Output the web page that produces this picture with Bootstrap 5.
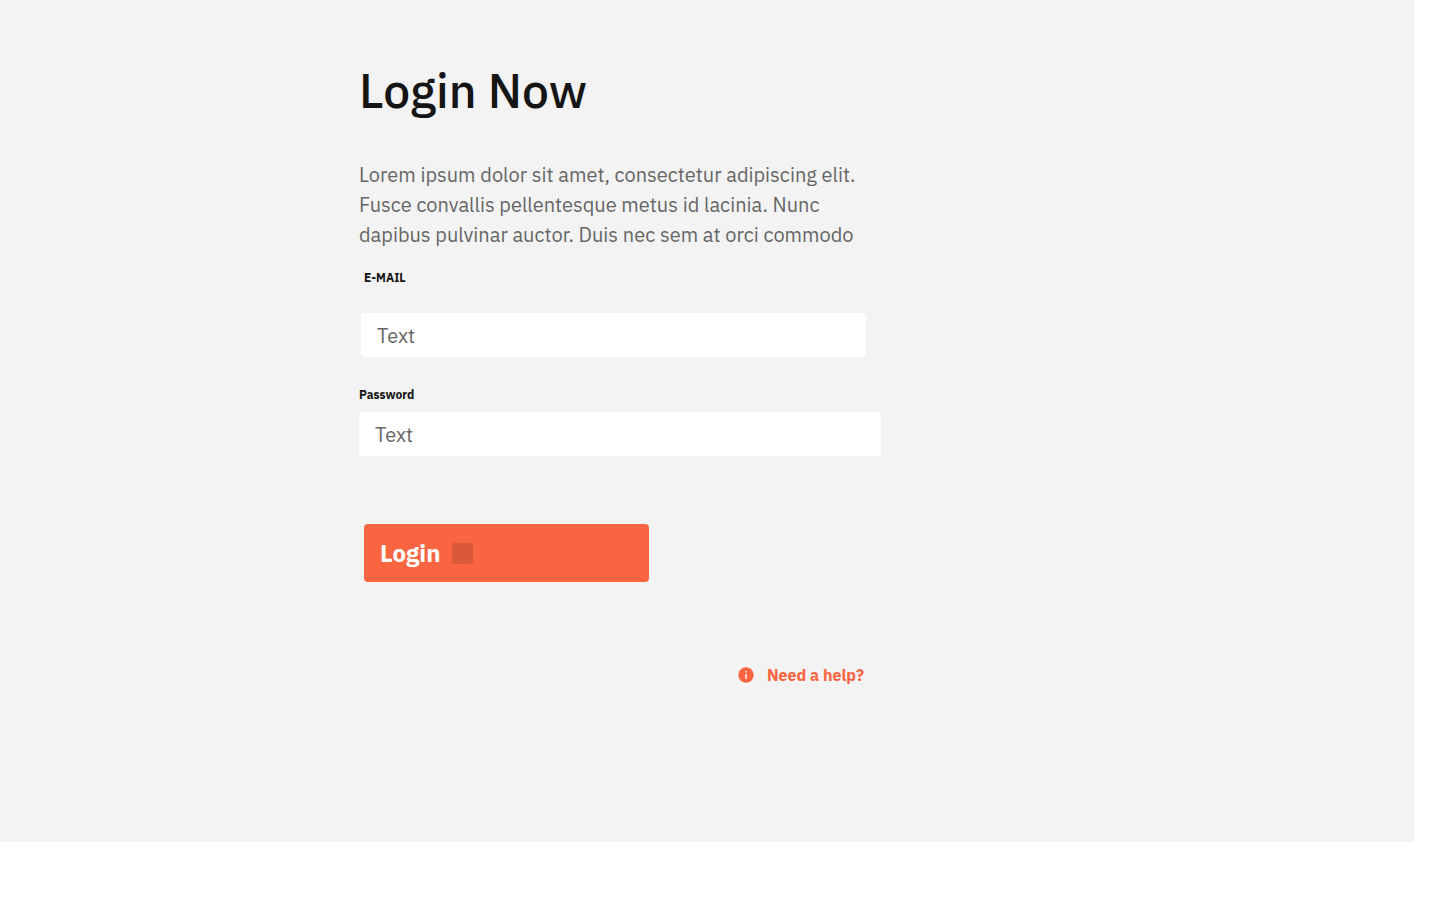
<!DOCTYPE html>
<html lang="en">
<head>
<meta charset="utf-8">
<meta name="viewport" content="width=device-width, initial-scale=1">
<title>Login</title>
<link href="https://cdn.jsdelivr.net/npm/bootstrap@5.3.0/dist/css/bootstrap.min.css" rel="stylesheet">
<style>
body { font-family: "IBM Plex Sans", Roboto, sans-serif; color: #151515; background: #fff; }
.login-panel { background: #f3f3f3; margin-right: 26px; min-height: 842px; padding: 62px 16px 0 calc(25vw - 1px); }
.login-column { max-width: 522px; }
.login-title { font-size: 48px; line-height: 56px; font-weight: 500; margin-bottom: 42px; }
.intro { font-size: 20px; line-height: 30px; color: #666; margin-bottom: 20px; }
.field-label { display: block; font-size: 12px; line-height: 16px; font-weight: 700; }
.login-field { height: 44px; padding: 0 16px; border: 0; border-radius: 4px; font-size: 20px; color: #666; }
.login-field::placeholder { color: #666; opacity: 1; }
.email-group { padding: 0 15px 0 2px; margin-bottom: 30px; }
.email-group .field-label { padding-left: 3px; margin-bottom: 27px; }
.password-group { margin-bottom: 68px; }
.password-group .field-label { margin-bottom: 9px; }
.login-button { width: 285px; height: 58px; padding: 0 16px; margin-left: 5px; gap: 12px; border: 0; border-radius: 4px; font-size: 24px; font-weight: 700; color: #fff; background: #f96541; }
.login-button:hover { color: #fff; background: #e85b39; }
.button-mark { width: 21px; height: 21px; border-radius: 2px; background: #d95939; }
.help-row { margin-top: 81px; padding-right: 17px; }
.help-link { font-size: 16px; line-height: 24px; font-weight: 700; color: #f96541; gap: 13px; }
.help-link:hover { color: #d95939; }
</style>
</head>
<body>
<main class="login-panel">
  <form class="login-column">
    <h1 class="login-title">Login Now</h1>
    <p class="intro">Lorem ipsum dolor sit amet, consectetur adipiscing elit.<br>Fusce convallis pellentesque metus id lacinia. Nunc<br>dapibus pulvinar auctor. Duis nec sem at orci commodo</p>
    <div class="email-group">
      <label class="field-label text-uppercase" for="email">E-mail</label>
      <input class="form-control login-field" id="email" type="email" placeholder="Text">
    </div>
    <div class="password-group">
      <label class="field-label" for="password">Password</label>
      <input class="form-control login-field" id="password" type="password" placeholder="Text">
    </div>
    <button class="btn login-button d-flex align-items-center" type="submit">Login <span class="button-mark" aria-hidden="true"></span></button>
    <div class="help-row d-flex justify-content-end">
      <a class="help-link d-flex align-items-center text-decoration-none" href="#">
        <svg width="16" height="16" viewBox="0 0 16 16" aria-hidden="true"><circle cx="8" cy="8" r="7.7" fill="#f96541"/><path d="M7.2 4h1.6v1.6H7.2zM7.2 7h1.6v5H7.2z" fill="#f3f3f3"/></svg>
        <span>Need a help?</span>
      </a>
    </div>
  </form>
</main>
<script src="https://cdn.jsdelivr.net/npm/bootstrap@5.3.0/dist/js/bootstrap.bundle.min.js"></script>
</body>
</html>
